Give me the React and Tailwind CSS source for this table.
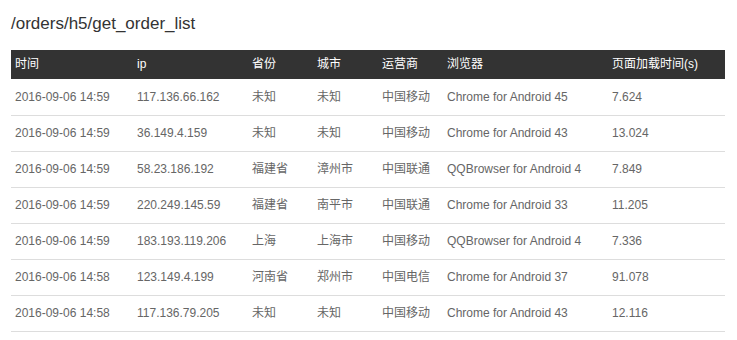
import React from 'react'

const rows = [
  ['2016-09-06 14:59', '117.136.66.162', '未知', '未知', '中国移动', 'Chrome for Android 45', '7.624'],
  ['2016-09-06 14:59', '36.149.4.159', '未知', '未知', '中国移动', 'Chrome for Android 43', '13.024'],
  ['2016-09-06 14:59', '58.23.186.192', '福建省', '漳州市', '中国联通', 'QQBrowser for Android 4', '7.849'],
  ['2016-09-06 14:59', '220.249.145.59', '福建省', '南平市', '中国联通', 'Chrome for Android 33', '11.205'],
  ['2016-09-06 14:59', '183.193.119.206', '上海', '上海市', '中国移动', 'QQBrowser for Android 4', '7.336'],
  ['2016-09-06 14:58', '123.149.4.199', '河南省', '郑州市', '中国电信', 'Chrome for Android 37', '91.078'],
  ['2016-09-06 14:58', '117.136.79.205', '未知', '未知', '中国移动', 'Chrome for Android 43', '12.116'],
]

const heads = ['时间', 'ip', '省份', '城市', '运营商', '浏览器', '页面加载时间(s)']
const widths = ['w-[122px]', 'w-[115px]', 'w-[65px]', 'w-[65px]', 'w-[65px]', 'w-[165px]', 'w-[117px]']

export default function App() {
  return (
    <div className="w-[737px] h-[340px] bg-white px-[11px] pt-[12px] font-['Liberation_Sans','Noto_Sans_CJK_SC',sans-serif]">
      <h1 className="text-[17px] leading-[24px] text-[#333] mb-[14px]">/orders/h5/get_order_list</h1>

      <table className="w-[714px] table-fixed border-collapse text-[12px]">
        <colgroup>
          {widths.map((w, i) => <col key={i} className={w} />)}
        </colgroup>
        <thead>
          <tr className="bg-[#333] text-white h-[29px]">
            {heads.map((h) => (
              <th key={h} className="text-left font-normal pl-[4px] leading-[29px]">{h}</th>
            ))}
          </tr>
        </thead>
        <tbody>
          {rows.map((r, i) => (
            <tr key={i} className="border-b border-[#ddd] h-[36px]">
              {r.map((c, j) => (
                <td key={j} className="pl-[4px] text-[#666] whitespace-nowrap">{c}</td>
              ))}
            </tr>
          ))}
        </tbody>
      </table>
    </div>
  )
}
